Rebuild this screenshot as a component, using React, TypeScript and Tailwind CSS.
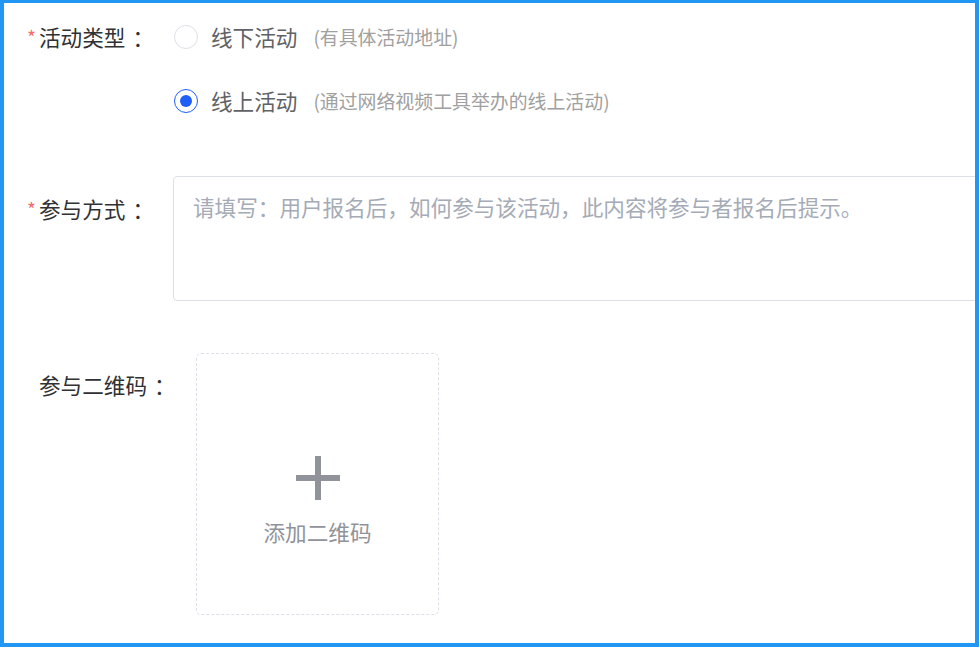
import React from 'react';

const font = "font-['Noto_Sans_CJK_SC','Noto_Sans',sans-serif]";

const Label: React.FC<{ text: string; required?: boolean; className?: string }> = ({ text, required, className }) => (
  <div className={`w-[146px] shrink-0 h-11 flex items-center whitespace-nowrap overflow-visible ${className ?? ''}`}>
    <span className="w-3 shrink-0 text-[19px] leading-none text-[#f56c6c] relative -top-[1px]">{required ? '*' : ''}</span>
    <span className="shrink-0 text-[21.6px] leading-none text-[#303133]">{text}</span>
    <span className="shrink-0 ml-[7px] text-[21.6px] leading-none text-[#303133]">：</span>
  </div>
);

const Radio: React.FC<{ label: string; hint: string; checked?: boolean }> = ({ label, hint, checked }) => (
  <label className="h-11 flex items-center cursor-pointer whitespace-nowrap">
    <span
      className={`ml-[1px] w-6 h-6 rounded-full border flex items-center justify-center bg-white ${
        checked ? 'border-[#1f5ff5]' : 'border-[#dcdfe6]'
      }`}
    >
      {checked && <span className="w-[12px] h-[12px] rounded-full bg-[#1f5ff5]" />}
    </span>
    <span className="ml-[13px] text-[21.6px] leading-none text-[#606266]">{label}</span>
    <span className="ml-[16px] text-[18.9px] leading-none text-[#a0a0a0]">({hint})</span>
  </label>
);

export default function App() {
  return (
    <div className={`w-[979px] h-[647px] bg-white border-[#2196f3] border-t-[3px] border-x-4 border-b-4 overflow-hidden ${font}`}>
      <div className="pl-[23px] pt-3">
        {/* 活动类型 */}
        <div className="flex">
          <Label text="活动类型" required />
          <div className="flex flex-col gap-5">
            <Radio label="线下活动" hint="有具体活动地址" />
            <Radio label="线上活动" hint="通过网络视频工具举办的线上活动" checked />
          </div>
        </div>

        {/* 参与方式 */}
        <div className="flex mt-[53px]">
          <Label text="参与方式" required className="mt-[11px]" />
          <textarea
            className={`w-[900px] h-[125px] shrink-0 resize-none rounded-[4px] border border-[#dcdfe6] pl-[19px] pt-[14px] text-[21.6px] leading-8 text-[#606266] placeholder:text-[#a5abb6] outline-none ${font}`}
            placeholder="请填写：用户报名后，如何参与该活动，此内容将参与者报名后提示。"
          />
        </div>

        {/* 参与二维码 */}
        <div className="flex mt-[52px]">
          <Label text="参与二维码" className="mt-[10px]" />
          <div className="ml-[23px] w-[243px] h-[262px] shrink-0 rounded-[5px] border border-dashed border-[#dcdfe6] flex flex-col items-center pt-[102px] cursor-pointer">
            <svg width="44" height="44" viewBox="0 0 44 44">
              <rect x="19" y="0" width="6" height="44" fill="#909399" />
              <rect x="0" y="19" width="44" height="6" fill="#909399" />
            </svg>
            <span className="mt-[17px] text-[21.6px] leading-[30px] text-[#909399]">添加二维码</span>
          </div>
        </div>
      </div>
    </div>
  );
}
